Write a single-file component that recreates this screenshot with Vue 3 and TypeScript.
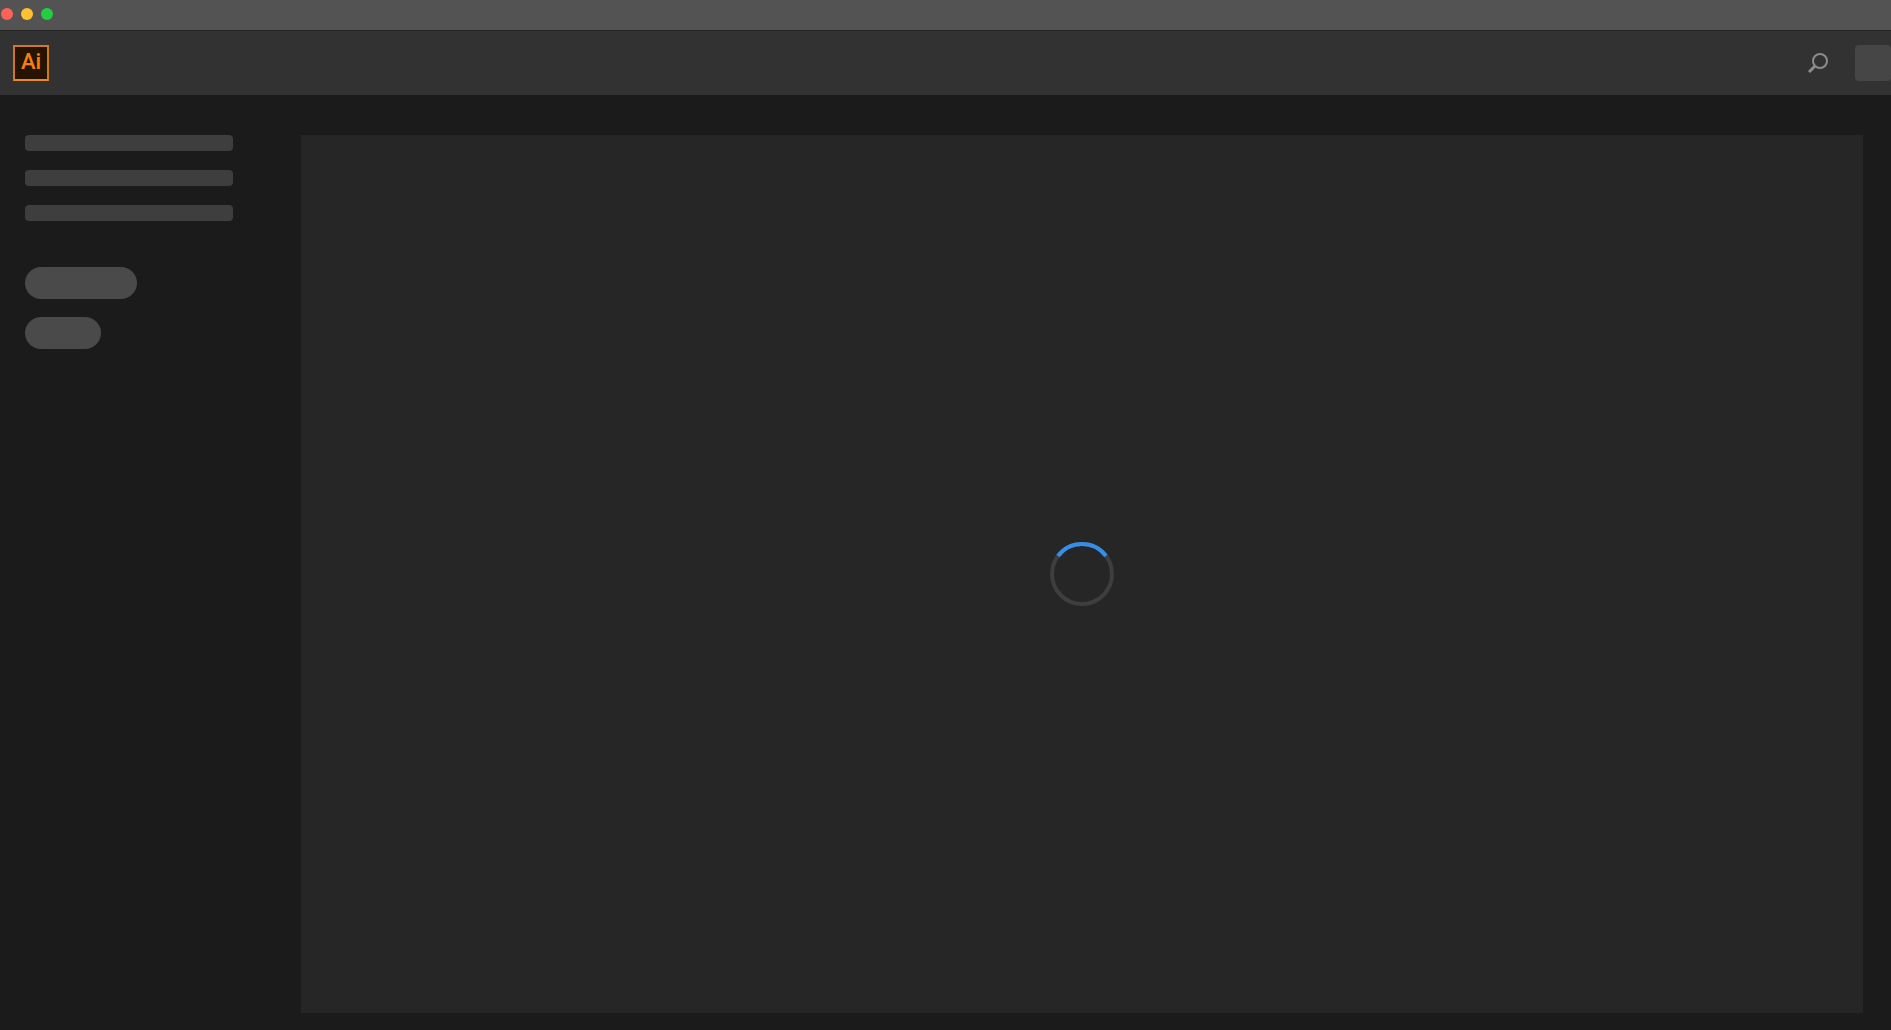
<script setup lang="ts">
const windowControls: string[] = ['close', 'minimize', 'zoom']
const navPlaceholders: number[] = [1, 2, 3]
</script>

<template>
  <div class="app">
    <div class="titlebar">
      <button
        v-for="control in windowControls"
        :key="control"
        type="button"
        class="dot"
        :class="control"
        :aria-label="control"
      ></button>
    </div>

    <header class="header">
      <div class="logo">Ai</div>
      <div class="actions">
        <button type="button" class="search" aria-label="Search">
          <svg width="20" height="20" viewBox="0 0 20 20" fill="none" aria-hidden="true">
            <circle cx="12" cy="8" r="7" stroke="#8c8c8c" stroke-width="2" />
            <path d="M7 13L1 19" stroke="#8c8c8c" stroke-width="3" />
          </svg>
        </button>
        <div class="avatar"></div>
      </div>
    </header>

    <div class="body">
      <aside class="sidebar">
        <div class="bars">
          <div v-for="n in navPlaceholders" :key="n" class="bar"></div>
        </div>
        <div class="pills">
          <div class="pill wide"></div>
          <div class="pill"></div>
        </div>
      </aside>
      <main class="content">
        <svg class="spinner" width="64" height="64" viewBox="0 0 64 64" fill="none" role="progressbar" aria-label="Loading">
          <circle cx="32" cy="32" r="30" stroke="#3e3e3e" stroke-width="4" />
          <path d="M8 14A30 30 0 0 1 56 14" stroke="#378ee8" stroke-width="4" />
        </svg>
      </main>
    </div>
  </div>
</template>

<style>
body {
  margin: 0;
  background: #1b1b1b;
}
</style>

<style scoped>
.app {
  display: flex;
  flex-direction: column;
  min-height: 100vh;
  background: #1b1b1b;
  font-family: "Open Sans", "Noto Sans", sans-serif;
}

.titlebar {
  box-sizing: border-box;
  display: flex;
  gap: 8px;
  height: 31px;
  padding: 8px 1px;
  background: #535353;
  border-bottom: 1px solid #252525;
}

button {
  padding: 0;
  border: 0;
  background: none;
}

.dot {
  width: 12px;
  height: 12px;
  border-radius: 50%;
}

.close {
  background: #ff6058;
}

.minimize {
  background: #ffc130;
}

.zoom {
  background: #27cd41;
}

.header {
  display: flex;
  align-items: center;
  justify-content: space-between;
  height: 64px;
  padding-left: 13px;
  background: #323232;
}

.logo {
  box-sizing: border-box;
  width: 36px;
  height: 36px;
  border: 2px solid #cf7a22;
  border-bottom-color: #ee8820;
  background: #261300;
  color: #f98010;
  font-family: Roboto, "Open Sans", sans-serif;
  font-size: 22px;
  font-weight: 500;
  line-height: 30px;
  text-align: center;
}

.actions {
  display: flex;
  align-items: center;
  gap: 27px;
}

.search {
  display: flex;
}

.avatar {
  width: 36px;
  height: 36px;
  border-radius: 4px;
  background: #464646;
}

.body {
  display: flex;
  flex: 1;
  padding: 40px 28px 17px 25px;
}

.sidebar {
  flex: none;
  width: 208px;
  margin-right: 68px;
}

.bars {
  display: grid;
  gap: 19px;
}

.bar {
  height: 16px;
  border-radius: 4px;
  background: #3e3e3e;
}

.pills {
  display: grid;
  gap: 18px;
  margin-top: 46px;
}

.pill {
  width: 76px;
  height: 32px;
  border-radius: 16px;
  background: #4a4a4a;
}

.pill.wide {
  width: 112px;
}

.content {
  display: flex;
  flex: 1;
  align-items: center;
  justify-content: center;
  background: #262626;
}
</style>
